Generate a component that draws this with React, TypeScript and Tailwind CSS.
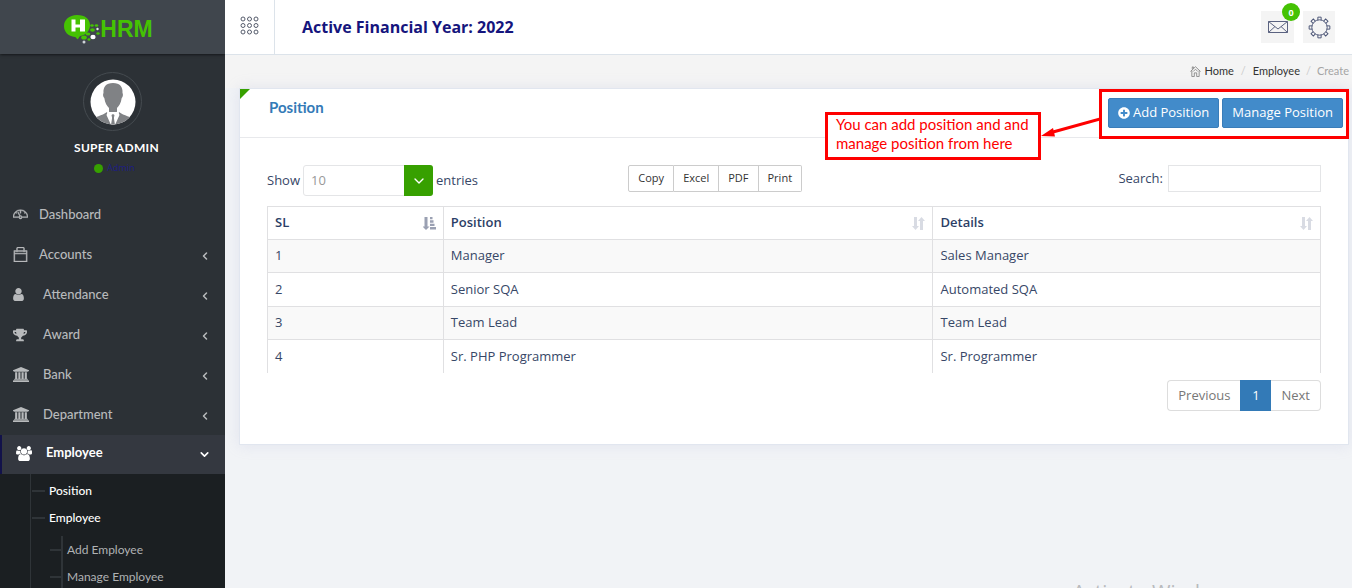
import React from "react";
import { TfiDashboard, TfiBag } from "react-icons/tfi";
import { FaTrophy, FaPlusCircle } from "react-icons/fa";
import { ChevronLeft, ChevronDown } from "lucide-react";

function UserIcon() {
  return (
    <svg viewBox="0 0 1280 1792" className="h-[15px] w-[11px]" fill="currentColor" aria-hidden="true">
      <path d="M1280 1399q0 109-62.500 187t-150.500 78h-854q-88 0-150.500-78t-62.500-187q0-85 8.500-160.500t31.500-152 58.500-131 94-89 134.500-34.500q131 128 313 128t313-128q76 0 134.500 34.500t94 89 58.500 131 31.500 152 8.500 160.500zm-256-887q0 159-112.500 271.500t-271.500 112.500-271.500-112.500-112.500-271.500 112.500-271.500 271.500-112.500 271.500 112.500 112.500 271.500z" />
    </svg>
  );
}

function BankIcon() {
  return (
    <svg viewBox="0 0 1920 1792" className="h-[15px] w-4" fill="currentColor" aria-hidden="true">
      <path d="M960 0l960 384v128h-128q0 26-20.500 45t-48.500 19h-1526q-28 0-48.500-19t-20.500-45h-128v-128zm-704 640h256v768h128v-768h256v768h128v-768h256v768h128v-768h256v768h59q28 0 48.500 19t20.500 45v64h-1664v-64q0-26 20.500-45t48.500-19h59v-768zm1595 960q28 0 48.500 19t20.500 45v128h-1920v-128q0-26 20.500-45t48.500-19h1782z" />
    </svg>
  );
}

function UsersIcon() {
  return (
    <svg viewBox="0 0 1920 1792" className="h-[15px] w-4" fill="currentColor" aria-hidden="true">
      <path d="M593 896q-162 5-265 128h-134q-82 0-138-40.500t-56-118.500q0-353 124-353 6 0 43.500 21t97.500 42.500 119 21.500q67 0 133-23-5 37-5 66 0 159 90 295zm1071 637q0 120-73 189.500t-194 69.500h-874q-121 0-194-69.500t-73-189.500q0-53 3.500-103.500t14-109 26.500-108.500 43-97.500 62-81 85.500-53.500 111.500-20q10 0 43 21.500t73 48 107 48 135 21.500 135-21.500 107-48 73-48 43-21.500q61 0 111.500 20t85.500 53.500 62 81 43 97.500 26.500 108.500 14 109 3.500 103.500zm-1024-1277q0 106-75 181t-181 75-181-75-75-181 75-181 181-75 181 75 75 181zm704 384q0 159-112.500 271.500t-271.500 112.500-271.500-112.500-112.500-271.500 112.500-271.500 271.500-112.500 271.500 112.500 112.500 271.500zm576 225q0 78-56 118.500t-138 40.500h-134q-103-123-265-128 90-136 90-295 0-29-5-66 66 23 133 23 59 0 119-21.500t97.500-42.500 43.500-21q124 0 124 353zm-128-609q0 106-75 181t-181 75-181-75-75-181 75-181 181-75 181 75 75 181z" />
    </svg>
  );
}

function EnvelopeIcon() {
  return (
    <svg viewBox="0 0 20 14" className="h-[14px] w-5" fill="none" stroke="#5a6280" aria-hidden="true">
      <path d="M.5 1.500h19v11H.5ZM.5 1.500 10 9l9.500-7.500M.5 12.500 7 6.500M19.500 12.500 13 6.500" />
    </svg>
  );
}

function Logo() {
  return (
    <span className="flex items-center font-['Liberation_Sans',sans-serif]">
      <svg viewBox="0 0 36 30" className="h-[30px] w-9" aria-hidden="true">
        <path d="M13 1C5 1 0 6 0 12s4 10 11 11c1 0 2 3 3 2l2-3c6-1 10-5 10-11C26 5 21 1 13 1Z" fill="#45c203" />
        <path d="M7.500 5.500h4v5h4.500v-5h5v12h-5v-4h-4.500v4h-4Z" fill="#fff" />
        <g fill="#45c203">
          <ellipse cx="28" cy="11.500" rx="1.800" ry="1.200" />
          <ellipse cx="32.500" cy="11.500" rx="1.800" ry="1.200" />
          <ellipse cx="28.500" cy="16" rx="2.400" ry="1.700" />
          <ellipse cx="34" cy="19.500" rx="1.700" ry="1.200" />
          <ellipse cx="20" cy="23.500" rx="2.800" ry="2" />
          <ellipse cx="25" cy="25.500" rx="1.500" ry="1.200" />
          <ellipse cx="24" cy="20" rx="2.400" ry="1.500" />
        </g>
        <ellipse cx="29" cy="23" rx="2.600" ry="2.200" fill="#fff" />
        <circle cx="33.500" cy="15" r="1.200" fill="#e5eee5" />
        <circle cx="20" cy="28" r="1.500" fill="#cfd4d8" />
      </svg>
      <span className="text-[23px] leading-[28px] font-bold text-[#45c203]">HRM</span>
    </span>
  );
}

function Avatar() {
  return (
    <span className="flex size-[59px] items-center justify-center rounded-full border border-[#454b50]">
      <svg viewBox="0 0 46 46" className="size-[46px]" role="img" aria-label="Super Admin">
        <defs>
          <clipPath id="avatar-clip">
            <circle cx="23" cy="23" r="22.500" />
          </clipPath>
        </defs>
        <g clipPath="url(#avatar-clip)">
          <rect width="46" height="46" fill="#fff" />
          <path d="M23 4c-7 0-10 4-9.500 10-.8 1-.5 4 .8 5 .7 5 2.700 8 4.700 10v4h8v-4c2-2 4-5 4.700-10 1.300-1 1.600-4 .8-5C33 8 30 4 23 4Z" fill="#808285" />
          <path d="M17 33C12 37 5 37 0 42v5h46v-5c-5-5-12-5-17-9l-6 13Z" fill="#808285" />
          <path d="m18 32-1.500 4L21 46h4l4.500-10-1.500-4-5 3.500Z" fill="#fff" />
          <path d="m21.500 36 1.500-1 1.500 1-.6 3 1.100 7h-4l1.100-7Z" fill="#808285" />
        </g>
      </svg>
    </span>
  );
}

function GearIcon() {
  const teeth = [0, 45, 90, 135, 180, 225, 270, 315];
  return (
    <svg viewBox="0 0 24 24" className="size-[23px]" fill="none" stroke="#4a5475" aria-hidden="true">
      <circle cx="12" cy="12" r="8" />
      {teeth.map((a) => (
        <path key={a} d="M10.300 4.200V1.200h3.400v3" transform={`rotate(${a} 12 12)`} />
      ))}
    </svg>
  );
}

function GridIcon() {
  const steps = [3, 9.5, 16];
  return (
    <svg viewBox="0 0 19 19" className="size-[19px]" fill="none" stroke="#555b6b" aria-hidden="true">
      {steps.map((y) => steps.map((x) => <circle key={`${x}-${y}`} cx={x} cy={y} r="2" />))}
    </svg>
  );
}

function HomeIcon() {
  return (
    <svg viewBox="0 0 12 12" className="size-[11px]" fill="none" stroke="#8a8a8a" aria-hidden="true">
      <path d="M.5 6 6 .8 11.500 6M2 5v6.500h2.700V7.500h2.600v4H10V5M2.500 3.500V1h1.200v1.500M3.500 6 6 3.500 8.500 6" />
    </svg>
  );
}

function SortBoth() {
  return (
    <svg viewBox="0 0 13 13" className="h-[13px] w-[13px]" fill="#d8dbe3" aria-hidden="true">
      <path d="M2 0h3v9h2L3.500 13 0 9h2ZM8 13h3V4h2L9.500 0 6 4h2Z" />
    </svg>
  );
}

function SortAscending() {
  return (
    <svg viewBox="0 0 13 13" className="h-[13px] w-[13px]" fill="#9aa0b2" aria-hidden="true">
      <path d="M1.500 0h3v9.500h2L3 13-.5 9.500h2ZM7 0h2.500v2.300H7ZM7 3.300h3.500v2.400H7ZM7 6.700h4.500V9H7ZM7 10h6v2.500H7Z" />
    </svg>
  );
}

type MenuItem = { label: string; icon: React.ReactNode; expandable: boolean; wide: boolean };

const menu: MenuItem[] = [
  { label: "Dashboard", icon: <TfiDashboard size={15} strokeWidth={0.5} />, expandable: false, wide: false },
  { label: "Accounts", icon: <TfiBag size={15} strokeWidth={0.5} />, expandable: true, wide: false },
  { label: "Attendance", icon: <UserIcon />, expandable: true, wide: true },
  { label: "Award", icon: <FaTrophy size={14} />, expandable: true, wide: true },
  { label: "Bank", icon: <BankIcon />, expandable: true, wide: true },
  { label: "Department", icon: <BankIcon />, expandable: true, wide: true },
];

function Sidebar() {
  return (
    <aside className="flex w-[225px] shrink-0 flex-col overflow-hidden bg-[#2c3136] font-[Lato,sans-serif]">
      <a href="#home" aria-label="HRM" className="flex h-[54px] shrink-0 items-center justify-center bg-[#40464d] pt-1 pr-2 shadow-sm shadow-black/40">
        <Logo />
      </a>
      <div className="flex shrink-0 flex-col items-center pt-[18px]">
        <Avatar />
        <p className="mt-2 pl-2 text-[12px] leading-[18px] font-bold tracking-wide text-white">SUPER ADMIN</p>
        <p className="mt-0.5 flex items-center gap-1 pl-1 font-['Open_Sans',sans-serif] text-[9px] leading-[18px] text-[#1d1d85]">
          <span className="size-[9px] rounded-full bg-[#37a000]" />
          Admin
        </p>
      </div>
      <nav className="mt-[18px] shrink-0 text-[13px] font-medium text-[#b8babc]">
        {menu.map((m) => (
          <a key={m.label} href="#menu" className="flex h-10 items-center pr-[14px] pb-px pl-[13px]">
            <span className={m.wide ? "w-[30px]" : "w-[26px]"}>{m.icon}</span>
            <span className="flex-1">{m.label}</span>
            {m.expandable && <ChevronLeft size={12} strokeWidth={3} className="mt-[3px]" />}
          </a>
        ))}
        <a href="#employee" className="flex h-[39px] items-center border-l-2 border-[#12124a] bg-[#343840] pr-[14px] pb-[3px] pl-[14px] font-bold text-white">
          <span className="w-[30px]"><UsersIcon /></span>
          <span className="flex-1">Employee</span>
          <ChevronDown size={13} strokeWidth={3} className="mt-[3px]" />
        </a>
        <div className="bg-[#1b1f22] pl-[30px] text-[12px] text-white">
          <ul className="border-l border-[#2f3438] pt-[3px] pb-10">
            <li>
              <a href="#position" className="flex h-[27px] items-center gap-1">
                <span className="ml-px h-0.5 w-[13px] bg-[#2f3438]" />Position
              </a>
            </li>
            <li>
              <a href="#employees" className="flex h-[27px] items-center gap-1">
                <span className="ml-px h-0.5 w-[13px] bg-[#2f3438]" />Employee
              </a>
              <ul className="ml-[19px] pt-[5px] font-normal text-[#b0b2b4]">
                {["Add Employee", "Manage Employee"].map((s) => (
                  <li key={s} className="flex h-[27px] items-center">
                    <span className="h-0.5 w-[11px] bg-[#2f3438]" />
                    <span className="h-full w-0.5 bg-[#2f3438]" />
                    <a href="#sub" className="ml-1">{s}</a>
                  </li>
                ))}
              </ul>
            </li>
          </ul>
        </div>
      </nav>
    </aside>
  );
}

function TopBar() {
  return (
    <header className="flex h-[55px] items-stretch border-b border-[#dce3ea] bg-white">
      <button aria-label="Toggle navigation" className="flex w-[50px] items-center justify-center border-r border-[#dce3ea] pr-px pb-[3px]">
        <GridIcon />
      </button>
      <h1 className="flex flex-1 items-center pl-[27px] text-[16px] font-bold text-[#15157d]">Active Financial Year: 2022</h1>
      <div className="flex items-center gap-[9px] pr-[17px]">
        <button aria-label="Messages" className="relative flex h-8 w-[33px] items-center justify-center bg-[#f4f4f4]">
          <EnvelopeIcon />
          <span className="absolute -top-2 -right-1.5 flex size-[18px] items-center justify-center rounded-full bg-[#45c203] text-[9px] leading-none font-bold text-white">0</span>
        </button>
        <button aria-label="Settings" className="flex size-8 items-center justify-center bg-[#f4f4f4]">
          <GearIcon />
        </button>
      </div>
    </header>
  );
}

const rows = [
  ["1", "Manager", "Sales Manager"],
  ["2", "Senior SQA", "Automated SQA"],
  ["3", "Team Lead", "Team Lead"],
  ["4", "Sr. PHP Programmer", "Sr. Programmer"],
];

const columns = [
  { label: "SL", width: "w-[16.7%]", icon: <SortAscending /> },
  { label: "Position", width: "w-[46.5%]", icon: <SortBoth /> },
  { label: "Details", width: "w-[36.8%]", icon: <SortBoth /> },
];

function Callout() {
  return (
    <div className="pointer-events-none absolute top-[23px] right-[247px] flex items-start">
      <p className="h-12 w-[216px] border-[3px] border-[#fe0000] bg-white pl-2 font-[Lato,sans-serif] text-[15px] leading-[19px] text-[#fe0000]">
        You can add position and and
        <br />
        manage position from here
      </p>
      <svg viewBox="0 0 61 30" className="h-[30px] w-[61px]" fill="#fe0000" aria-hidden="true">
        <path d="M61 6.500 12 20" stroke="#fe0000" strokeWidth="3" />
        <path d="M0 24 12 16l2 8.500Z" />
      </svg>
    </div>
  );
}

function PositionCard() {
  const action = "flex h-[30px] items-center gap-[3px] rounded-[2px] border border-[#3a7db9] bg-[#428bca] px-[9px] text-[13px] text-white";
  const exportButton = "h-[27px] border-y border-r border-[#ccc] px-[9px] text-[11px] text-[#333]";
  return (
    <section className="relative mr-[3px] ml-[14px] border border-[#e1e6ef] bg-white shadow-[0_0_14px_rgba(160,165,210,0.2)]">
      <span className="absolute top-0 left-0 size-[10px] bg-[#37a000] [clip-path:polygon(0_0,100%_0,0_100%)]" />
      <div className="flex h-[49px] items-start justify-between border-b border-[#e8e9ec] pl-[29px]">
        <h2 className="pt-[7px] font-[Lato,sans-serif] text-[15px] leading-[22px] font-bold text-[#337ab7]">Position</h2>
        <div className="relative -mr-px">
          <div className="flex h-[50px] gap-[3px] border-[3px] border-[#fe0000] pt-[6px] pr-[3px] pl-[6px]">
            <button className={action}><FaPlusCircle size={12} />Add Position</button>
            <button className={action}>Manage Position</button>
          </div>
          <Callout />
        </div>
      </div>
      <div className="px-[27px] pt-[27px] pb-[33px] text-[13px] text-[#374767]">
        <div className="grid grid-cols-3 items-start gap-[30px]">
          <label className="flex items-center gap-[3px] whitespace-nowrap">
            Show
            <span className="relative flex">
              <select defaultValue="10" className="h-[31px] w-[130px] appearance-none rounded-[3px] border border-[#e4e5e7] bg-white pl-[7px] text-[#999]">
                <option>10</option>
                <option>25</option>
                <option>50</option>
              </select>
              <span className="pointer-events-none absolute inset-y-0 right-0 flex w-[29px] items-center justify-center rounded-r-[3px] bg-[#37a000] text-white">
                <ChevronDown size={16} />
              </span>
            </span>
            entries
          </label>
          <div className="flex">
            <button className={`${exportButton} rounded-l-[2px] border-l`}>Copy</button>
            <button className={exportButton}>Excel</button>
            <button className={exportButton}>PDF</button>
            <button className={`${exportButton} rounded-r-[2px]`}>Print</button>
          </div>
          <label className="flex items-center justify-end gap-[5px]">
            Search:
            <input type="search" className="h-[27px] w-[153px] border border-[#e4e5e7] px-2" />
          </label>
        </div>
        <table className="mt-[10px] h-[167px] w-full table-fixed border-collapse text-left">
          <thead>
            <tr className="h-[33px]">
              {columns.map((c) => (
                <th key={c.label} scope="col" className={`${c.width} border border-[#e0e0e2] px-[7px] font-semibold text-[#2c3e66]`}>
                  <span className="flex items-center justify-between">{c.label}{c.icon}</span>
                </th>
              ))}
            </tr>
          </thead>
          <tbody>
            {rows.map((r) => (
              <tr key={r[0]} className="h-[33px] border-t border-[#e0e0e2] odd:bg-[#f9f9f9]">
                {r.map((cell, i) => (
                  <td key={i} className="border-x border-[#e0e0e2] px-[7px]">{cell}</td>
                ))}
              </tr>
            ))}
          </tbody>
        </table>
        <div className="mt-[7px] flex justify-end text-[#777]">
          <button className="h-[31px] rounded-l-[4px] border border-r-0 border-[#ddd] px-[10px]">Previous</button>
          <button aria-current="page" className="h-[31px] w-[31px] bg-[#337ab7] text-white">1</button>
          <button className="h-[31px] rounded-r-[4px] border border-l-0 border-[#ddd] px-[10px]">Next</button>
        </div>
      </div>
    </section>
  );
}

export default function App() {
  return (
    <div className="relative flex h-screen overflow-hidden bg-[#f1f3f6] font-['Open_Sans',sans-serif]">
      <Sidebar />
      <main className="min-w-0 flex-1">
        <TopBar />
        <nav aria-label="Breadcrumb" className="flex h-[33px] items-center justify-end bg-[#f4f4f4] pr-[3px] pb-px font-[Lato,sans-serif] text-[11px] text-[#333]">
          <HomeIcon />
          <a href="#home" className="ml-[3px]">Home</a>
          <span className="px-[7px] text-[#ccc]">/</span>
          <a href="#employee">Employee</a>
          <span className="px-[6px] text-[#ccc]">/</span>
          <span className="text-[#a5a5a5]">Create</span>
        </nav>
        <PositionCard />
      </main>
      <div className="pointer-events-none absolute right-[115px] -bottom-[21px] text-[20px] leading-[34px] text-[#b8babd]">Activate Windows</div>
    </div>
  );
}
